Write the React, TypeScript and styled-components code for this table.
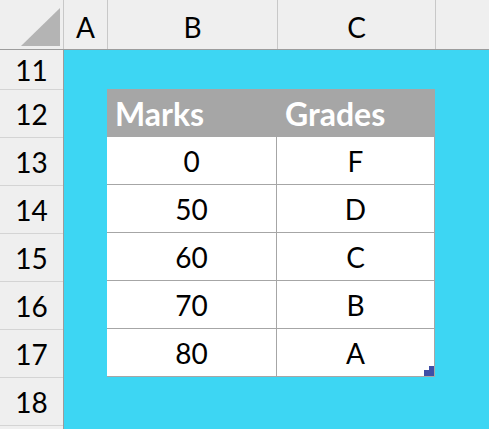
import React from 'react';
import styled, { createGlobalStyle } from 'styled-components';

const GlobalStyle = createGlobalStyle`
  html, body {
    margin: 0;
    padding: 0;
    background: #efefef;
  }
  body {
    font-family: 'Lato', 'Liberation Sans', sans-serif;
    color: #000;
  }
`;

const Frame = styled.div`
  width: 489px;
  height: 429px;
  display: flex;
  flex-direction: column;
  overflow: hidden;
  background: #efefef;
`;

const ColumnHeaderRow = styled.div`
  display: flex;
  height: 49px;
  border-bottom: 1px solid #9c9c9c;
  flex-shrink: 0;
`;

const Corner = styled.div`
  width: 63px;
  border-right: 1px solid #c8c8c8;
  display: flex;
  align-items: flex-start;
  justify-content: flex-start;
`;

const ColHeader = styled.div<{ $width?: number }>`
  width: ${props => (props.$width ? `${props.$width}px` : 'auto')};
  flex: ${props => (props.$width ? '0 0 auto' : '1')};
  border-right: ${props => (props.$width ? '1px solid #c8c8c8' : 'none')};
  display: flex;
  align-items: center;
  justify-content: center;
  padding-top: 4px;
  box-sizing: border-box;
  font-size: 28px;
`;

const Body = styled.div`
  display: flex;
  flex: 1;
`;

const RowHeaders = styled.div`
  width: 63px;
  border-right: 1px solid #9c9c9c;
  display: flex;
  flex-direction: column;
  flex-shrink: 0;
`;

const RowHeader = styled.div<{ $height: number }>`
  height: ${props => props.$height}px;
  border-bottom: 1px solid #d4d4d4;
  display: flex;
  align-items: center;
  justify-content: center;
  font-size: 28px;
  flex-shrink: 0;
`;

const Canvas = styled.div`
  flex: 1;
  background: #3dd6f3;
  padding: 39px 0 0 43px;
`;

const Table = styled.div`
  position: relative;
  width: 328px;
  display: grid;
  grid-template-columns: 170px 158px;
  grid-auto-rows: 48px;
`;

const HeadCell = styled.div`
  background: #a6a6a6;
  color: #fff;
  font-weight: 700;
  font-size: 32px;
  display: flex;
  align-items: center;
  padding-left: 8px;
`;

const Cell = styled.div`
  background: #fff;
  border-bottom: 1px solid #a6a6a6;
  border-right: 1px solid #a6a6a6;
  display: flex;
  align-items: center;
  justify-content: center;
  font-size: 28px;
  box-sizing: border-box;
`;

const FillHandle = styled.svg`
  position: absolute;
  right: 1px;
  bottom: 1px;
`;

const rows = [
  { mark: '0', grade: 'F' },
  { mark: '50', grade: 'D' },
  { mark: '60', grade: 'C' },
  { mark: '70', grade: 'B' },
  { mark: '80', grade: 'A' },
];

const rowNumbers = [12, 13, 14, 15, 16, 17, 18];

const App: React.FC = () => {
  return (
    <>
      <GlobalStyle />
      <Frame>
        <ColumnHeaderRow>
          <Corner>
            <svg width="63" height="49" viewBox="0 0 63 49">
              <polygon points="21,46 60,46 60,8" fill="#b4b4b4" />
            </svg>
          </Corner>
          <ColHeader $width={44}>A</ColHeader>
          <ColHeader $width={170}>B</ColHeader>
          <ColHeader $width={158}>C</ColHeader>
          <ColHeader />
        </ColumnHeaderRow>
        <Body>
          <RowHeaders>
            <RowHeader $height={39}>11</RowHeader>
            {rowNumbers.map(n => (
              <RowHeader key={n} $height={47}>{n}</RowHeader>
            ))}
          </RowHeaders>
          <Canvas>
            <Table>
              <HeadCell>Marks</HeadCell>
              <HeadCell>Grades</HeadCell>
              {rows.map(r => (
                <React.Fragment key={r.mark}>
                  <Cell>{r.mark}</Cell>
                  <Cell>{r.grade}</Cell>
                </React.Fragment>
              ))}
              <FillHandle width="10" height="10" viewBox="0 0 10 10">
                <path d="M5 0 H10 V10 H0 V4 H5 Z" fill="#3f4fa6" />
              </FillHandle>
            </Table>
          </Canvas>
        </Body>
      </Frame>
    </>
  );
};

export default App;
